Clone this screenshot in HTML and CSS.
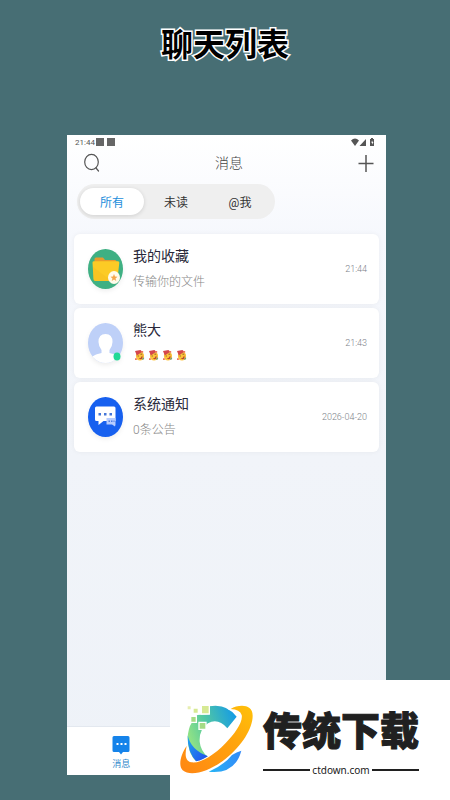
FILE: index.html
```html
<!DOCTYPE html>
<html lang="zh-CN">
<head>
<meta charset="utf-8">
<meta name="viewport" content="width=device-width, initial-scale=1">
<title>聊天列表</title>
<link rel="stylesheet" href="styles.css">
</head>
<body>
<h1 class="headline">聊天列表</h1>
<main class="phone">
  <div class="status">
    <span class="clock">21:44</span><i class="block"></i><i class="block"></i>
    <svg class="signals" viewBox="0 0 24 8" width="24" height="8" fill="#555" aria-hidden="true">
      <path d="M0 2.6Q4 -1.4 8 2.6L4 8zM8.500 8L15 1V8zM19 1h1V0h2v1h1v7h-4z"/>
      <path d="M21.500 2.500l-1.500 2h1v2l1.500-2.500h-1z" fill="#fff"/>
    </svg>
  </div>
  <header class="topbar">
    <button class="icon-button" aria-label="搜索">
      <svg viewBox="0 0 18 20" width="18" height="20" fill="none" stroke="#555" stroke-width="1.200" stroke-linecap="round"><ellipse cx="8.500" cy="9" rx="6.800" ry="7.700"/><path d="M13 15l2.500 3"/></svg>
    </button>
    <h2 class="title">消息</h2>
    <button class="icon-button" aria-label="添加">
      <svg viewBox="0 0 18 20" width="18" height="20" fill="none" stroke="#555" stroke-width="1.500"><path d="M9 2v17M1.500 10.500h15"/></svg>
    </button>
  </header>
  <nav class="tabs" aria-label="筛选">
    <button class="tab active">所有</button>
    <button class="tab">未读</button>
    <button class="tab">@我</button>
  </nav>
  <ul class="chats">
    <li class="chat">
      <svg class="avatar" viewBox="0 0 36 40" aria-hidden="true">
        <ellipse cx="18" cy="20" rx="17.500" ry="20" fill="#3fb083"/>
        <path d="M7 10q0-1.500 1.500-1.500h7l2 2.500h10q1.500 0 1.500 1.500V20H7z" fill="#e99b2c"/>
        <path d="M5 13.500q0-1.300 1.500-1.300h24q1.500 0 1.300 1.500L30 30q0 2-2 2H8q-2 0-2-2z" fill="#fccb25"/>
        <path d="M5.500 18L24 32H8q-2 0-2-2z" fill="#f5bd20" opacity=".5"/>
        <ellipse cx="26.500" cy="28.500" rx="6" ry="6.500" fill="#fffbea"/>
        <path d="M26.500 25l1 2.500 2.500.200-2 1.800.800 2.500-2.300-1.500-2.300 1.500.800-2.500-2-1.800 2.500-.200z" fill="#f4a64a"/>
      </svg>
      <div class="body"><h3 class="name">我的收藏</h3><p class="preview">传输你的文件</p></div>
      <time class="time">21:44</time>
    </li>
    <li class="chat">
      <svg class="avatar" viewBox="0 0 36 40" aria-hidden="true">
        <defs><clipPath id="face"><ellipse cx="18" cy="20" rx="17.500" ry="20"/></clipPath></defs>
        <g clip-path="url(#face)"><path d="M0 0h36v40H0z" fill="#bed0f8"/><path d="M4 40V34q4-3 10-4v-3q-3-4-3-8 0-8 7-8t7 8q0 4-3 8v3q6 1 10 4v6z" fill="#fff"/></g>
        <ellipse cx="29.500" cy="33.500" rx="3.500" ry="4" fill="#22d996"/>
      </svg>
      <div class="body">
        <h3 class="name">熊大</h3>
        <p class="preview emojis" role="img" aria-label="四个表情">
          <svg viewBox="0 0 11 12"><use href="#party"/></svg>
          <svg viewBox="0 0 11 12"><use href="#party"/></svg>
          <svg viewBox="0 0 11 12"><use href="#party"/></svg>
          <svg viewBox="0 0 11 12"><use href="#party"/></svg>
        </p>
      </div>
      <time class="time">21:43</time>
    </li>
    <li class="chat">
      <svg class="avatar" viewBox="0 0 36 40" aria-hidden="true">
        <ellipse cx="18" cy="20" rx="17.500" ry="20" fill="#1760ef"/>
        <path d="M9 9.500h17.500q1.500 0 1.500 1.500v13H16l-5 4v-4H9q-1.500 0-1.500-1.500V11q0-1.500 1.500-1.500z" fill="#fff"/>
        <path d="M11 16h2.500v2.500H11zM16.500 16H19v2.500h-2.500zM22 16h2.500v2.500H22z" fill="#4476d8"/>
        <path d="M19 21h9v6.500l-.500 2-3-2H19z" fill="#b6ccff"/>
        <path d="M21 23.500h1.500v1.500H21zM23.500 23.500H25v1.500h-1.500zM26 23.500h1v1.500h-1z" fill="#537ee0"/>
      </svg>
      <div class="body"><h3 class="name">系统通知</h3><p class="preview">0条公告</p></div>
      <time class="time">2026-04-20</time>
    </li>
  </ul>
  <footer class="bottombar">
    <a class="nav-item" href="#">
      <svg viewBox="0 0 18 20" width="18" height="20" aria-hidden="true"><path d="M2 1h14q1.500 0 1.500 1.500v13Q17.500 17 16 17h-5l-2 2.500L7 17H2Q.500 17 .500 15.500v-13Q.500 1 2 1z" fill="#1583ea"/><path d="M4.500 8h2v2h-2zM8.500 8h2v2h-2zM12.500 8h2v2h-2z" fill="#fff"/></svg>
      <span>消息</span>
    </a>
  </footer>
</main>
<aside class="brand">
  <svg class="logo" viewBox="40 90 225 210" width="75" height="70" aria-hidden="true">
    <defs>
      <linearGradient id="ring" x1="0" y1="1" x2="1" y2="0"><stop offset="0" stop-color="#ff8613"/><stop offset=".6" stop-color="#ffa40d"/><stop offset="1" stop-color="#ffc109"/></linearGradient>
      <linearGradient id="arc" x1="0" y1=".6" x2="1" y2=".2"><stop offset="0" stop-color="#97e582"/><stop offset=".4" stop-color="#55c9a0"/><stop offset="1" stop-color="#149be6"/></linearGradient>
      <linearGradient id="wing" x1="0" y1="0" x2="1" y2="1"><stop offset="0" stop-color="#20a9ef"/><stop offset="1" stop-color="#2347ed"/></linearGradient>
      <linearGradient id="tail" x1="0" y1="0" x2="1" y2="0"><stop offset="0" stop-color="#27b6f5"/><stop offset="1" stop-color="#3389f8"/></linearGradient>
    </defs>
    <path d="M133 94Q185 84 216 125L188 160Q160 128 130 145Q103 163 105 200Q108 228 130 246L98 263Q70 240 69 190Q70 160 82 142L98 120L133 118z" fill="url(#arc)"/>
    <path d="M69 181Q79 226 130 244L98 263Q67 233 69 181z" fill="url(#wing)"/>
    <path d="M230 227Q211 299 132 290Q177 271 202 240Q216 231 230 227z" fill="url(#tail)"/>
    <path class="ring" d="M198 102C222 88 264 86 264 122C264 160 232 212 183 251C140 286 80 308 54 286C40 272 48 238 66 213C60 240 62 258 80 262C108 266 150 238 181 206C210 178 236 140 231 120Q226 103 198 102z" fill="url(#ring)"/>
    <g stroke="#fff" stroke-width="4"><path d="M110 91h24v26h-24zM85 99h16v16H85z" fill="#d6e993"/><path d="M78 124h17v18H78zM103 142h21v21h-21z" fill="#a5db85"/><path d="M67 92h13v13H67z" fill="#e7eeb0"/></g>
  </svg>
  <div class="wordmark">
    <strong class="brand-name">传统下载</strong>
    <span class="domain">ctdown.com</span>
  </div>
</aside>
<svg class="sprite" aria-hidden="true">
  <symbol id="party" viewBox="0 0 11 12">
    <ellipse cx="5.500" cy="6.500" rx="4.500" ry="5" fill="#fcc33b"/>
    <path d="M0 1l6-1 2 2-6 4z" fill="#d4474c"/><path d="M7 1h2v2H7zM0 9h2v2H0z" fill="#ed785e"/>
    <path d="M3 6h1v1H3zM6 4h2v1H6z" fill="#654029"/><path d="M4 9q3 0 4-3 1 4-2 4z" fill="#b8432e"/><path d="M8 9l2-1v2l-2 1z" fill="#7c9c77"/>
  </symbol>
</svg>
</body>
</html>
```
FILE: styles.css
```css
* {
  box-sizing: border-box;
  margin: 0;
  padding: 0;
}

body {
  display: flex;
  flex-direction: column;
  position: relative;
  min-height: 100vh;
  padding: 20px 64px 25px 67px;
  background: #476e74;
  color: #333;
  font-family: Roboto, "Noto Sans CJK SC", sans-serif;
}

button {
  border: 0;
  background: none;
  font: inherit;
  color: inherit;
}

.headline {
  height: 115px;
  margin: 0 -64px 0 -67px;
  text-align: center;
  font-size: 32px;
  line-height: 50px;
  color: #000;
  -webkit-text-stroke: 3px #fff;
  paint-order: stroke fill;
}

.phone {
  flex: 1;
  display: flex;
  flex-direction: column;
  background: linear-gradient(#fff, #f6f8fd 16%, #f1f4f9 50%, #eef2f8);
}

.status {
  display: flex;
  align-items: center;
  gap: 3px;
  height: 14px;
  padding: 0 11px 0 8px;
  font-size: 8px;
  color: #555;
}

.block {
  width: 8px;
  height: 8px;
  background: #666;
}

.clock {
  margin-right: -2px;
}

.signals {
  margin-left: auto;
}

.topbar {
  display: flex;
  justify-content: space-between;
  align-items: center;
  height: 27px;
  padding: 0 11px 0 16px;
}

.icon-button,
.icon-button svg {
  display: block;
}

.title {
  font-size: 14px;
  line-height: 20px;
  font-weight: 300;
  color: #444;
}

.tabs {
  display: flex;
  align-self: flex-start;
  margin: 8px 0 15px 10px;
  padding: 4px 3px;
  border-radius: 18px;
  background: #efefef;
}

.tab {
  width: 64px;
  height: 27px;
  border-radius: 14px;
  font-size: 12px;
}

.tab.active {
  background: #fff;
  color: #1c8edb;
  box-shadow: 0 1px 4px #0002;
}

.chats {
  flex: 1;
  display: flex;
  flex-direction: column;
  gap: 4px;
  padding: 0 7px;
  list-style: none;
}

.chat {
  display: flex;
  align-items: center;
  gap: 9px;
  height: 70px;
  padding: 0 12px 0 13px;
  border-radius: 6px;
  background: #fff;
  box-shadow: 0 0 5px #0000000d;
}

.avatar {
  width: 37px;
  height: 40px;
  overflow: visible;
  filter: drop-shadow(0 2px 2px #0001);
}

.body {
  flex: 1;
}

.name {
  font-size: 14px;
  line-height: 24px;
  font-weight: 400;
  color: #29293a;
}

.preview {
  font-size: 12px;
  line-height: 20px;
  height: 26px;
  padding-top: 4px;
  font-weight: 300;
  color: #888;
}

.emojis {
  display: flex;
  align-items: center;
  gap: 4px;
  padding: 0 2px;
}

.emojis svg {
  width: 10px;
  height: 11px;
}

.time {
  font-size: 9px;
  font-weight: 300;
  color: #7c8289;
}

.bottombar {
  height: 49px;
  padding: 8px 0;
  border-top: 1px solid #e3e8ef;
  background: #fff;
}

.nav-item {
  display: flex;
  flex-direction: column;
  align-items: center;
  width: 34%;
  gap: 2px;
  font-size: 9px;
  line-height: 14px;
  text-decoration: none;
  color: #3289cb;
}

.brand {
  display: flex;
  position: absolute;
  right: 0;
  bottom: 0;
  width: 280px;
  height: 120px;
  padding: 25px 31px 0 8px;
  gap: 10px;
  background: #fff;
  color: #202020;
}

.logo {
  flex: none;
}

.ring {
  stroke: #fff;
  stroke-width: 5px;
  paint-order: stroke;
}

.wordmark {
  flex: 1;
}

.brand-name {
  display: block;
  font-size: 39px;
  line-height: 55px;
  font-weight: 900;
  white-space: nowrap;
  -webkit-text-stroke: 1px #202020;
}

.domain {
  display: flex;
  align-items: center;
  gap: 2px;
  font: 10px/20px "Noto Sans", sans-serif;
}

.domain::before,
.domain::after {
  content: "";
  flex: 1;
  height: 2px;
  background: #202020;
}

.sprite {
  display: none;
}
```
